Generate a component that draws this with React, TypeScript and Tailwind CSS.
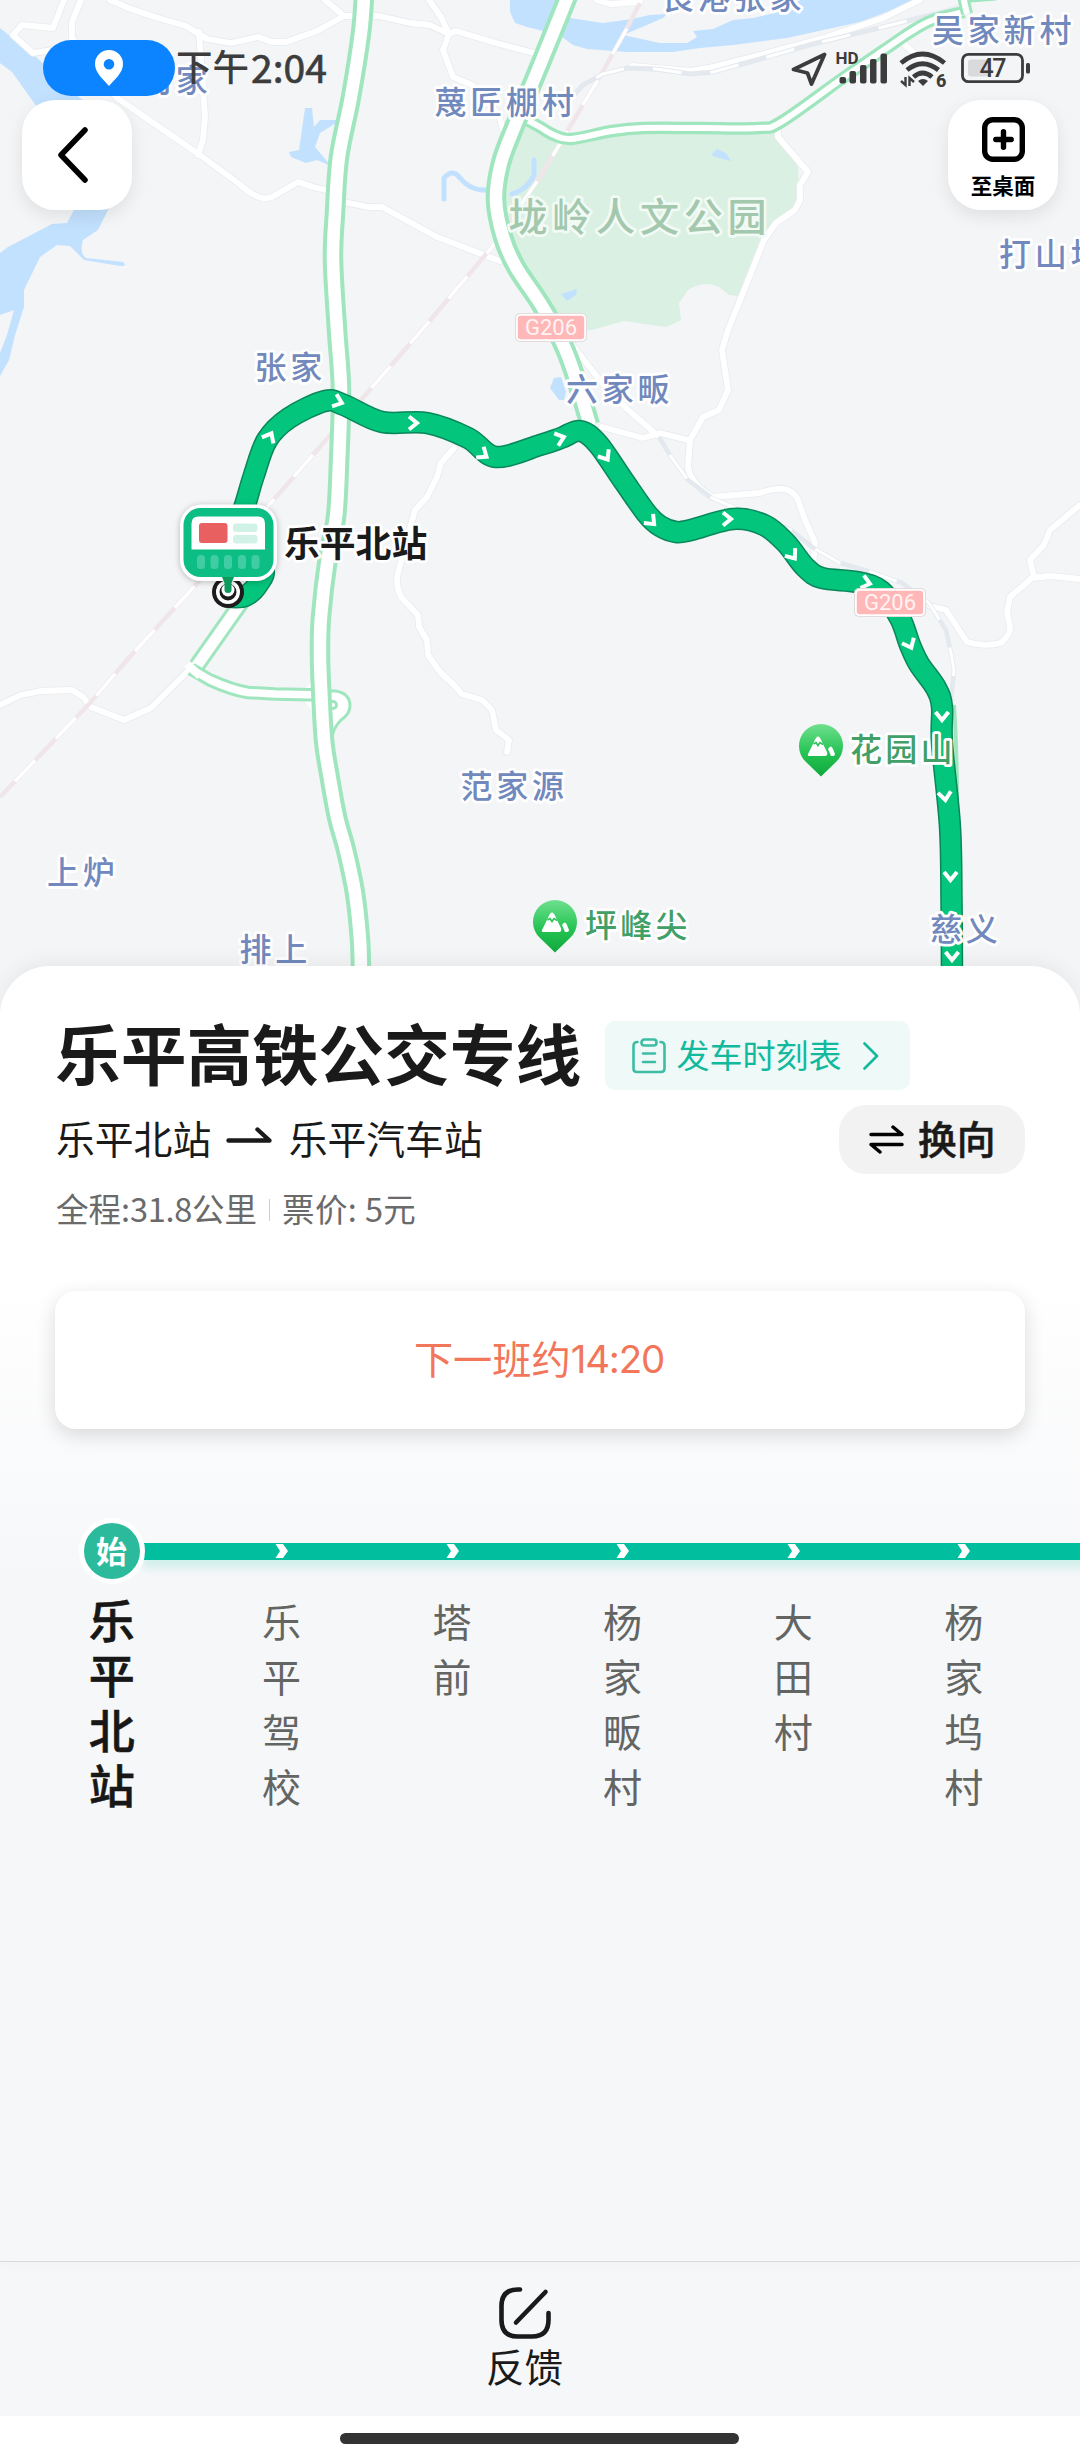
import React from "react";

const CJK = "font-['Noto_Sans_CJK_SC',sans-serif]";

type Pt = [number, number];

/** Catmull-Rom spline through the points, as a cubic path. */
function smooth(p: Pt[]): string {
  let d = `M${p[0][0]} ${p[0][1]}`;
  for (let i = 0; i < p.length - 1; i++) {
    const a = p[i - 1] ?? p[i];
    const b = p[i];
    const c = p[i + 1];
    const e = p[i + 2] ?? c;
    d += `C${b[0] + (c[0] - a[0]) / 6} ${b[1] + (c[1] - a[1]) / 6} ${c[0] - (e[0] - b[0]) / 6} ${c[1] - (e[1] - b[1]) / 6} ${c[0]} ${c[1]}`;
  }
  return d;
}

const villageRoads = [
  "M64 0L53 28L22 25L13 35L33 53L52 50",
  "M81 0L72 22V38L117 98L200 155L238 183Q260 203 272 197L298 182L313 187L331 191L344 202L368 207H382L437 237L500 261",
  "M110 0L131 9L158 18L186 26L207 39L231 43L258 37L272 42H286L317 31L344 16H379L410 23L430 25L449 34L456 31L496 43L542 55",
  "M325 0L344 16",
  "M429 0L441 17L449 34L443 50L453 77L472 85L499 115L504 133",
  "M199 32L205 117L203 140L198 155",
  "M778 131V137L808 172L800 185V200L795 210L776 223L764 240L747 283L728 330L722 350L728 390L719 410L703 417L690 440L688 467Q691 484 712 497L760 493Q790 482 798 500L805 520L815 542L813 566",
  "M602 427L643 438L660 433L688 440",
  "M567 338L602 383L626 408L657 435",
  "M930 606L946 610L967 642Q984 647 1001 643Q1011 634 1010 626L1007 613L1010 597L1032 578L1050 576L1080 579",
  "M1034 577L1030 560L1044 545L1050 530L1080 505",
  "M454 448L441 463L437 477L427 497L415 510L398 573Q395 584 401 597L418 615L419 627L427 640L428 655L440 672L454 685L462 694L482 700L492 710L496 730L509 740L507 752",
  "M0 705L21 695L41 691L72 690L83 697L91 707L124 720L151 708L189 670",
  "M597 0L610 4L640 2",
  "M632 66L690 71L713 67L760 55L827 37L883 18L920 0",
  "M903 43L924 62",
];

const expressway: Pt[] = [
  [364, -4], [361, 33], [351, 97], [339, 157], [335, 213], [333, 260], [337, 330], [341, 390], [339, 463], [336, 517],
  [328, 557], [321, 617], [320, 655], [321, 687], [324, 740], [329, 773], [337, 817], [346, 850], [355, 893], [360, 940], [361, 975],
];
const nationalRoad: Pt[] = [
  [568, -4], [540, 65], [516, 123], [501, 163], [496, 200], [503, 237], [516, 267], [540, 303], [561, 340], [573, 370], [590, 425],
];
const ringRoad: Pt[] = [
  [527, 120], [540, 127], [554, 135], [571, 139], [612, 131], [643, 128], [700, 128], [758, 128], [781, 122], [843, 78], [884, 50], [912, 31], [933, 20], [964, 12],
];
const busRoute: Pt[] = [
  [229, 597], [245, 596], [258, 584], [262, 568], [230, 550], [236, 530], [245, 505], [254, 475], [267, 440], [289, 418], [325, 401], [344, 405], [382, 422], [427, 423],
  [468, 438], [496, 457], [540, 445], [561, 438], [580, 431], [598, 444], [623, 480], [647, 514], [660, 526], [676, 532],
  [691, 530], [733, 519], [764, 525], [786, 543], [805, 567], [822, 578], [857, 582], [881, 591], [900, 618], [910, 645],
  [919, 664], [936, 688], [942, 707], [942, 743], [950, 827], [951.5, 900], [952, 975],
];
const railPink = "M640 3L626 30L602 73L574 120L540 177L492 247L422 330L368 392L269 505L127 660L90 703L0 797";
const railGrey = "M963 7L883 27L813 44L753 61L713 72L690 74L657 69L627 68L603 74L583 85L572 97";
const railEast =
  "M659 437L671 457L688 480L712 498L733 507L791 530L812 547L840 563L871 572L902 583L929 603L946 630L951 653L954 670L951 700";

const arrows: [number, number, number][] = [
  [270, 436, -62], [339, 402, 20], [414, 423, 0], [484, 455, 35], [561, 438, -18], [606, 457, 57], [652, 522, 45],
  [728, 519, 0], [793, 556, 53], [867, 583, 15], [910, 645, 65], [942, 717, 90], [945, 797, 83], [950.5, 877, 90], [952, 957, 90],
];

const places: [string, number, number][] = [
  ["司家", 140, 92], ["蔑匠棚村", 434.5, 114], ["良港张家", 662, 9], ["吴家新村", 932, 42], ["打山坞", 999, 266], ["张家", 254.5, 379],
  ["六家畈", 566, 401], ["范家源", 460.5, 798], ["上炉", 47, 884], ["排上", 239.5, 961], ["慈义", 930, 941],
];

function GreenRoad({ d, outer, inner }: { d: string; outer: number; inner: number }) {
  return (
    <g fill="none">
      <path d={d} stroke="#9fe6be" strokeWidth={outer} />
      <path d={d} stroke="#fff" strokeWidth={inner} />
    </g>
  );
}

function RoadBadge({ x, y }: { x: number; y: number }) {
  return (
    <g transform={`translate(${x} ${y})`}>
      <rect width="72" height="29" rx="5" fill="#e3dcde" />
      <rect x="1" y="1" width="70" height="27" rx="4.5" fill="#fff" />
      <rect x="2.8" y="2.8" width="66.4" height="23.4" rx="3" fill="#ffb7b7" />
      <text x="36" y="22" textAnchor="middle" fontSize="22" fill="#fff" fillOpacity="0.85" className="font-[Roboto,sans-serif]">G206</text>
    </g>
  );
}

function MountainPin({ x, y }: { x: number; y: number }) {
  return (
    <g transform={`translate(${x} ${y})`}>
      <path d="M0 51.5L-15 37A22 22 0 1 1 15 37Z" fill="url(#pin)" />
      <path d="M-13 29L-7 17Q-3 6 1 17L6 27Q7 31 4 31H-11Q-14 31 -13 29Z" fill="#fff" />
      <path d="M-7.5 19L-5 17.5L-3 20.5L-1 17.5L2 19.5" fill="none" stroke="#2cc45a" strokeWidth="1.6" />
      <path d="M7 24Q10 19 12 24L14 29Q14 31 12 31H10Z" fill="#fff" />
    </g>
  );
}

function StationMarker() {
  return (
    <g>
      <circle cx="228" cy="592" r="16" fill="#1c1c1c" />
      <circle cx="228" cy="592" r="12" fill="#fff" />
      <circle cx="228" cy="592" r="8.500" fill="#1c1c1c" />
      <circle cx="228" cy="590" r="6.500" fill="#fff" />
      <rect x="180" y="504.500" width="97" height="76.500" rx="21" fill="#fff" className="drop-shadow-[0_1px_3px_rgba(0,0,0,0.25)]" />
      <path d="M222 577H234L231.500 583V590Q231.500 593 228 593Q224.500 593 224.500 590V583Z" fill="#0b9a5c" />
      <rect x="183.500" y="508" width="90" height="69" rx="17" fill="#0cbd84" />
      <path d="M191.500 549.500V523.500Q191.500 516.500 198.500 516.500H258Q265 516.500 265 523.500V549.500Z" fill="#fff" />
      <rect x="199" y="523" width="28.500" height="20" rx="3" fill="#e96060" />
      <rect x="233" y="523.500" width="24.500" height="8.500" rx="3" fill="#d2f2e8" />
      <rect x="233" y="535" width="24.500" height="8.500" rx="3" fill="#d2f2e8" />
      {[197, 210.5, 224, 238, 251.5].map((x) => (
        <rect key={x} x={x} y="555" width="8" height="14" rx="3.500" fill="#41cda4" />
      ))}
    </g>
  );
}

function RouteMap() {
  return (
    <svg viewBox="0 0 1080 1014" className={`block h-[1014px] w-[1080px] ${CJK}`}>
      <defs>
        <linearGradient id="pin" x1="0" y1="0" x2="0" y2="1">
          <stop offset="0" stopColor="#6fe08e" />
          <stop offset="0.55" stopColor="#25c354" />
          <stop offset="1" stopColor="#10a83c" />
        </linearGradient>
      </defs>
      <rect width="1080" height="1014" fill="#f3f5f7" />
      <g fill="#c2e1ff">
        <path d="M0 28L34 55L79 97L112 127L108 210L98 230L83 240Q79 253 86 258L123 262Q128 266 120 266L84 260L70 246L57 245L40 257L24 290V307L15 335L9 360L0 376V353L7 335L14 310L0 315V253L8 247L52 224L67 223L74 210L37 107L12 72L0 63Z" />
        <path d="M305 108H312L314 127L320 120H341L320 133L315 147L331 166L317 160L306 163L291 157L289 152L299 150Z" />
        <path d="M510 0V12L515 23L527 27L543 31L562 37L573 45L587 49L627 52H673L700 48L733 45L787 38L860 22L900 7L916 0H800L787 10L753 18L733 20L713 29L693 31L697 37L687 43L660 43L623 35L647 25L663 18L667 14L650 15L632 19L603 23L570 18L560 0Z" />
      </g>
      <path
        d="M520 125L540 128L554 138L571 142L612 134L643 131H778L781 137L798 167L800 200L776 223L764 240L738 296L729 295L719 287Q705 280 688 290L679 303L681 320L666 327L624 321L592 330L555 333L545 308L516 267L503 237L496 200L501 163L516 123Z"
        fill="#daf0e2"
      />
      <g fill="#c2e1ff">
        <path d="M711 155L717 149L726 153L731 161L719 158Z" />
        <path d="M561 294L577 289L576 295L567 301Z" />
        <path d="M554 378L561 377L566 392L564 400H559L550 388Z" />
      </g>
      <g fill="none" stroke="#c2e1ff" strokeWidth="5" strokeLinecap="round">
        <path d="M444 199V178Q453 168 460 178Q469 189 482 190H490" />
        <path d="M512 194Q527 190 534 175V160" />
      </g>
      <g fill="none" strokeLinejoin="round" strokeLinecap="round">
        {villageRoads.map((d) => (
          <path key={d} d={d} stroke="#e9ecef" strokeWidth="7.500" />
        ))}
        {villageRoads.map((d) => (
          <path key={d} d={d} stroke="#fff" strokeWidth="5.800" />
        ))}
      </g>
      <g fill="none">
        <path d={railPink} stroke="#f0e6e9" strokeWidth="4.500" />
        <path d={railPink} stroke="#fff" strokeWidth="3.400" strokeDasharray="29 30" strokeDashoffset="30" />
        <path d={railGrey} stroke="#e3e9ee" strokeWidth="5" />
        <path d={railGrey} stroke="#fff" strokeWidth="3" strokeDasharray="29 29" />
        <path d={railEast} stroke="#e3e9ee" strokeWidth="4.500" />
        <path d={railEast} stroke="#fff" strokeWidth="3" strokeDasharray="29 30" strokeDashoffset="38" />
      </g>
      <path d="M300 695L313 680V712Z" fill="#fff" />
      <GreenRoad d="M250 590L193 671" outer={17} inner={11} />
      <GreenRoad d="M191 669L210 680Q232 690 248 692.500L275 694L322 695" outer={13.500} inner={7.500} />
      <path d="M187 664L200 676" stroke="#fff" strokeWidth="8" />
      <path d="M328 691H335Q350 693 350 706Q350 714 341 720Q333 728 332 738L325 735V691Z" fill="#fff" stroke="#9fe6be" strokeWidth="3" />
      <circle cx="333" cy="705" r="3.500" fill="#fff" stroke="#9fe6be" strokeWidth="3" />
      <GreenRoad d={smooth(ringRoad)} outer={12.500} inner={6} />
      <GreenRoad d="M967 14L963 -4" outer={12} inner={6} />
      <path d="M970 1L996 -1" stroke="#9fe6be" strokeWidth="3" />
      <GreenRoad d={smooth(expressway)} outer={20.500} inner={12.500} />
      <GreenRoad d={smooth(nationalRoad)} outer={20.500} inner={12.500} />
      <path d="M954 705Q957 750 957 800" fill="none" stroke="#9fe6be" strokeWidth="4" />
      <g fill="none" strokeLinejoin="round">
        <path d={smooth(busRoute)} stroke="#08875a" strokeWidth="22.500" />
        <path d={smooth(busRoute)} stroke="#04c57c" strokeWidth="19.500" />
        {arrows.map(([x, y, a]) => (
          <path key={`${x}-${y}`} d="M-5 -6.500L3 0L-5 6.500" transform={`translate(${x} ${y}) rotate(${a})`} stroke="#fff" strokeWidth="4" strokeLinejoin="miter" />
        ))}
      </g>
      <RoadBadge x={515} y={313} />
      <RoadBadge x={854} y={588} />
      <g stroke="#fff" strokeWidth="5.500" strokeLinejoin="round" paintOrder="stroke" fontSize="32" letterSpacing="3.800" fontWeight="500" fill="#7189bd">
        {places.map(([t, x, y]) => (
          <text key={t} x={x} y={y}>{t}</text>
        ))}
        <g fill="#41a067" letterSpacing="3.300">
          <text x="850" y="761">花园山</text>
          <text x="585" y="937">坪峰尖</text>
        </g>
        <text x="508.500" y="231" fontSize="39" letterSpacing="4.800" fill="#a3c8ae" stroke="#f2faf5">垅岭人文公园</text>
        <text x="284" y="557" fontSize="35.800" letterSpacing="0" fontWeight="700" fill="#1a1a1a">乐平北站</text>
      </g>
      <MountainPin x={821} y={725} />
      <MountainPin x={555} y={901} />
      <StationMarker />
    </svg>
  );
}

function StatusBar() {
  return (
    <div className="absolute top-[40px] left-[43px] flex h-[56px] w-[990px] items-center">
      <div className="flex h-[56px] w-[132px] items-center justify-center rounded-full bg-[#0d84ff]">
        <svg viewBox="0 0 28 36" className="h-[36px] w-[28px]">
          <path d="M14 0A14 14 0 0 1 28 14C28 23 19 30 14 36C9 30 0 23 0 14A14 14 0 0 1 14 0ZM14 9A5.300 5.300 0 1 0 14 19.600A5.300 5.300 0 1 0 14 9Z" fill="#fff" fillRule="evenodd" />
        </svg>
      </div>
      <div className={`ml-px flex pb-[3px] text-[36.500px] leading-none font-medium whitespace-nowrap text-[#3c3c3c] ${CJK}`}>
        下午<span className="ml-[2px] text-[39px] leading-[36px] font-normal [-webkit-text-stroke:0.7px_#3c3c3c]">2:04</span>
      </div>
      <svg viewBox="791 40 242 56" className="ml-auto h-[56px] w-[242px] font-[Roboto,sans-serif]" fill="#3c3c3c">
        <path d="M824.500 54.500L793.500 69.500L807.500 73L811.500 84Z" fill="none" stroke="#3c3c3c" strokeWidth="3.800" strokeLinejoin="round" />
        <text x="835.500" y="64" fontSize="17" fontWeight="700">HD</text>
        <rect x="839.500" y="77" width="6.500" height="6.500" rx="2" />
        <rect x="849.500" y="71" width="6.500" height="12.500" rx="2" />
        <rect x="860" y="65" width="6.500" height="18.500" rx="2" />
        <rect x="870" y="59" width="6.500" height="24.500" rx="2" />
        <rect x="880.500" y="53.500" width="6.500" height="30" rx="2" />
        <g fill="none" stroke="#3c3c3c" strokeWidth="4.800">
          <path d="M901 63Q922.500 45 944.500 63" />
          <path d="M907 70Q922.500 57.500 938.500 70" />
          <path d="M913.500 77Q922.500 69 932 77" />
        </g>
        <path d="M918 81Q923 77 928 81L923 86Z" />
        <path d="M901 81L905.500 85V77M909.500 86V78L914 82" fill="none" stroke="#3c3c3c" strokeWidth="2.400" />
        <text x="936" y="86.500" fontSize="18" fontWeight="800">6</text>
        <rect x="962.500" y="54.300" width="60" height="27.400" rx="6" fill="none" stroke="#3c3c3c" strokeWidth="2.800" />
        <rect x="968" y="59.500" width="21" height="17" rx="3" fill="#d9dadb" />
        <text x="979.500" y="77" fontSize="25" fontWeight="500" letterSpacing="-1.500">47</text>
        <rect x="1026" y="63" width="4" height="10.500" rx="1.500" />
      </svg>
    </div>
  );
}

function MapButtons() {
  const box = "flex h-[110px] w-[110px] flex-col items-center rounded-[33px] bg-white shadow-[0_6px_18px_rgba(0,0,0,0.09)]";
  return (
    <div className="absolute top-[100px] left-0 flex w-full justify-between px-[22px]">
      <button className={`${box} justify-center`}>
        <svg viewBox="0 0 30 56" className="mr-[8px] h-[56px] w-[30px]">
          <path d="M27 3L3 28L27 53" fill="none" stroke="#000" strokeWidth="5.500" strokeLinecap="round" strokeLinejoin="round" />
        </svg>
      </button>
      <button className={`${box} pt-[17px]`}>
        <svg viewBox="0 0 43 45" className="h-[45px] w-[43px] shrink-0" fill="none" stroke="#000" strokeWidth="5.400">
          <rect x="2.700" y="2.700" width="37.600" height="39.600" rx="8" />
          <path d="M21.500 14.800V30.200M13.800 22.500H29.200" strokeLinecap="round" />
        </svg>
        <span className={`mt-[12px] text-[21.5px] leading-[22px] font-bold text-black ${CJK}`}>至桌面</span>
      </button>
    </div>
  );
}

function Header() {
  return (
    <header className={`flex flex-col px-[55px] pt-[55px] ${CJK}`}>
      <div className="flex h-[69px] items-center">
        <h1 className="w-[550px] pb-[9px] text-[65.8px] leading-[69px] font-bold whitespace-nowrap text-[#1a1a1a]">乐平高铁公交专线</h1>
        <button className="flex h-[69px] w-[305px] items-center rounded-[10px] bg-[#effaf8] pl-[27px] text-[33px] leading-[66px] text-[#12b99d]">
          <svg viewBox="0 0 34 36" className="h-[36px] w-[34px]" fill="none" stroke="#3dbda3" strokeWidth="2.600" strokeLinecap="round">
            <path d="M5.500 4Q1.500 4 1.500 8V30.500Q1.500 34 5 34H29Q32.500 34 32.500 30.500V8Q32.500 4 28.500 4" />
            <rect x="9.500" y="1.500" width="15" height="6" rx="2.800" />
            <path d="M11 15.500H23M11 24H23" />
          </svg>
          <span className="ml-[10.500px] pb-[3px]">发车时刻表</span>
          <svg viewBox="0 0 16 28" className="ml-[21px] h-[28px] w-[16px]" fill="none" stroke="#12b99d" strokeWidth="2.600" strokeLinecap="round" strokeLinejoin="round">
            <path d="M1.500 1.500L14 14L1.500 26.500" />
          </svg>
        </button>
      </div>
      <div className="mt-[15px] flex h-[69px] items-center text-[38.8px] text-[#1a1a1a]">
        <span className="ml-[1px] pb-[5px] leading-[64px]">乐平北站</span>
        <svg viewBox="0 0 46 16" className="mr-[16.500px] mb-[10px] ml-[15px] h-[16px] w-[46px]" fill="none" stroke="#1a1a1a" strokeWidth="4.400" strokeLinecap="round" strokeLinejoin="round">
          <path d="M2.500 13.500H43.500L31.500 2.500" />
        </svg>
        <span className="pb-[5px] leading-[64px]">乐平汽车站</span>
        <button className="ml-auto flex h-[69px] w-[186px] items-center rounded-[27px] bg-[#f2f2f2] pl-[30px] leading-[64px] font-medium">
          <svg viewBox="0 0 35 29" className="h-[29px] w-[35px]" fill="none" stroke="#000" strokeWidth="3.500" strokeLinecap="round" strokeLinejoin="round">
            <path d="M2 9.500H33L24 2M33 19.500H2L11 27" />
          </svg>
          <span className="ml-[14px] pb-[5px] [-webkit-text-stroke:0.5px_#1a1a1a]">换向</span>
        </button>
      </div>
      <div className="mt-[10px] mb-[2px] flex h-[48px] items-center text-[32.5px] leading-[48px] whitespace-nowrap text-[#6a6a6a]">
        <span className="ml-[1px] w-[200px]">全程:<span className="tracking-[-0.3px]">31.8</span>公里</span>
        <i className="mt-[4px] mr-[12px] ml-[13px] h-[22px] w-px bg-[#ccc]" />
        <span className="tracking-[0.400px]">票价: 5元</span>
      </div>
    </header>
  );
}

const stops = ["乐平北站", "乐平驾校", "塔前", "杨家畈村", "大田村", "杨家坞村"];

function Timeline() {
  return (
    <section className={`mt-[89px] overflow-hidden pl-[26.5px] ${CJK}`}>
      <div className="flex h-[66px] items-center">
        <div className="z-10 ml-[52.500px] flex h-[66px] w-[66px] shrink-0 items-center justify-center rounded-full border-[5.5px] border-white bg-[#2bbb9c] pr-[1px] pb-[3px] text-[31px] leading-none font-bold text-white">始</div>
        <div className="-ml-[2px] flex h-[17px] w-[1020px] shrink-0 items-center bg-[#00be9e] pl-[132px] shadow-[0_8px_10px_rgba(0,190,158,0.16)]">
          {stops.slice(1).map((s) => (
            <svg key={s} viewBox="0 0 13 14" className="mr-[157.600px] h-[14px] w-[13px] shrink-0">
              <path d="M0.500 0H8L13 7L8 14H0.500L5 7Z" fill="#fff" />
            </svg>
          ))}
        </div>
      </div>
      <ol className="mt-[7px] flex">
        {stops.map((s, i) => (
          <li
            key={s}
            className={
              i === 0
                ? "mr-[-1px] flex w-[170.6px] shrink-0 flex-col items-center text-[46px] leading-[55px] font-medium text-[#171717] [-webkit-text-stroke:0.6px_#171717]"
                : "mt-[1.500px] flex w-[170.6px] shrink-0 flex-col items-center text-[39px] leading-[55px] text-[#636563]"
            }
          >
            {Array.from(s).map((c) => (
              <span key={c}>{c}</span>
            ))}
          </li>
        ))}
      </ol>
    </section>
  );
}

export default function App() {
  return (
    <div className="flex h-[2460px] w-[1080px] flex-col overflow-hidden bg-white">
      <div className="relative h-[1014px] shrink-0 overflow-hidden">
        <RouteMap />
        <StatusBar />
        <MapButtons />
      </div>
      <main className="relative -mt-[48px] flex h-[1295px] shrink-0 flex-col rounded-t-[50px] bg-[linear-gradient(#fff_0px,#fff_315px,#f6f7f9_620px)] shadow-[0_-4px_20px_rgba(0,0,0,0.06)]">
        <Header />
        <div className={`mx-[55px] mt-[57px] flex h-[138px] items-center justify-center rounded-[21px] bg-white pr-[2px] text-[39.200px] text-[#f2765a] shadow-[0_6px_20px_rgba(0,0,0,0.14)] ${CJK}`}>
          <span className="pb-[5px]">下一班约</span>
          <span className="pb-[1px] font-[Inter,sans-serif] text-[38.500px] tracking-[-1.2px]">14:20</span>
        </div>
        <Timeline />
      </main>
      <footer className={`flex h-[155px] shrink-0 flex-col items-center border-t border-[#dcdee0] bg-[#f6f7f9] pt-[25px] pr-[31px] text-[38.500px] text-[#1a1a1a] ${CJK}`}>
        <svg viewBox="0 0 52 52" className="h-[52px] w-[52px] shrink-0" fill="none" stroke="#1a1a1a" strokeWidth="4.600" strokeLinecap="round">
          <path d="M21 2.500H19Q2.500 2.500 2.500 19V33Q2.500 49.500 19 49.500H33Q49.500 49.500 49.500 33V26" />
          <path d="M46.500 5L17 35.500" />
        </svg>
        <span className="mt-[4px] leading-[44px]">反馈</span>
      </footer>
      <div className="flex flex-1 justify-center pt-[17px] pr-[2px]">
        <div className="h-[11px] w-[399px] rounded-full bg-[#333]" />
      </div>
    </div>
  );
}
